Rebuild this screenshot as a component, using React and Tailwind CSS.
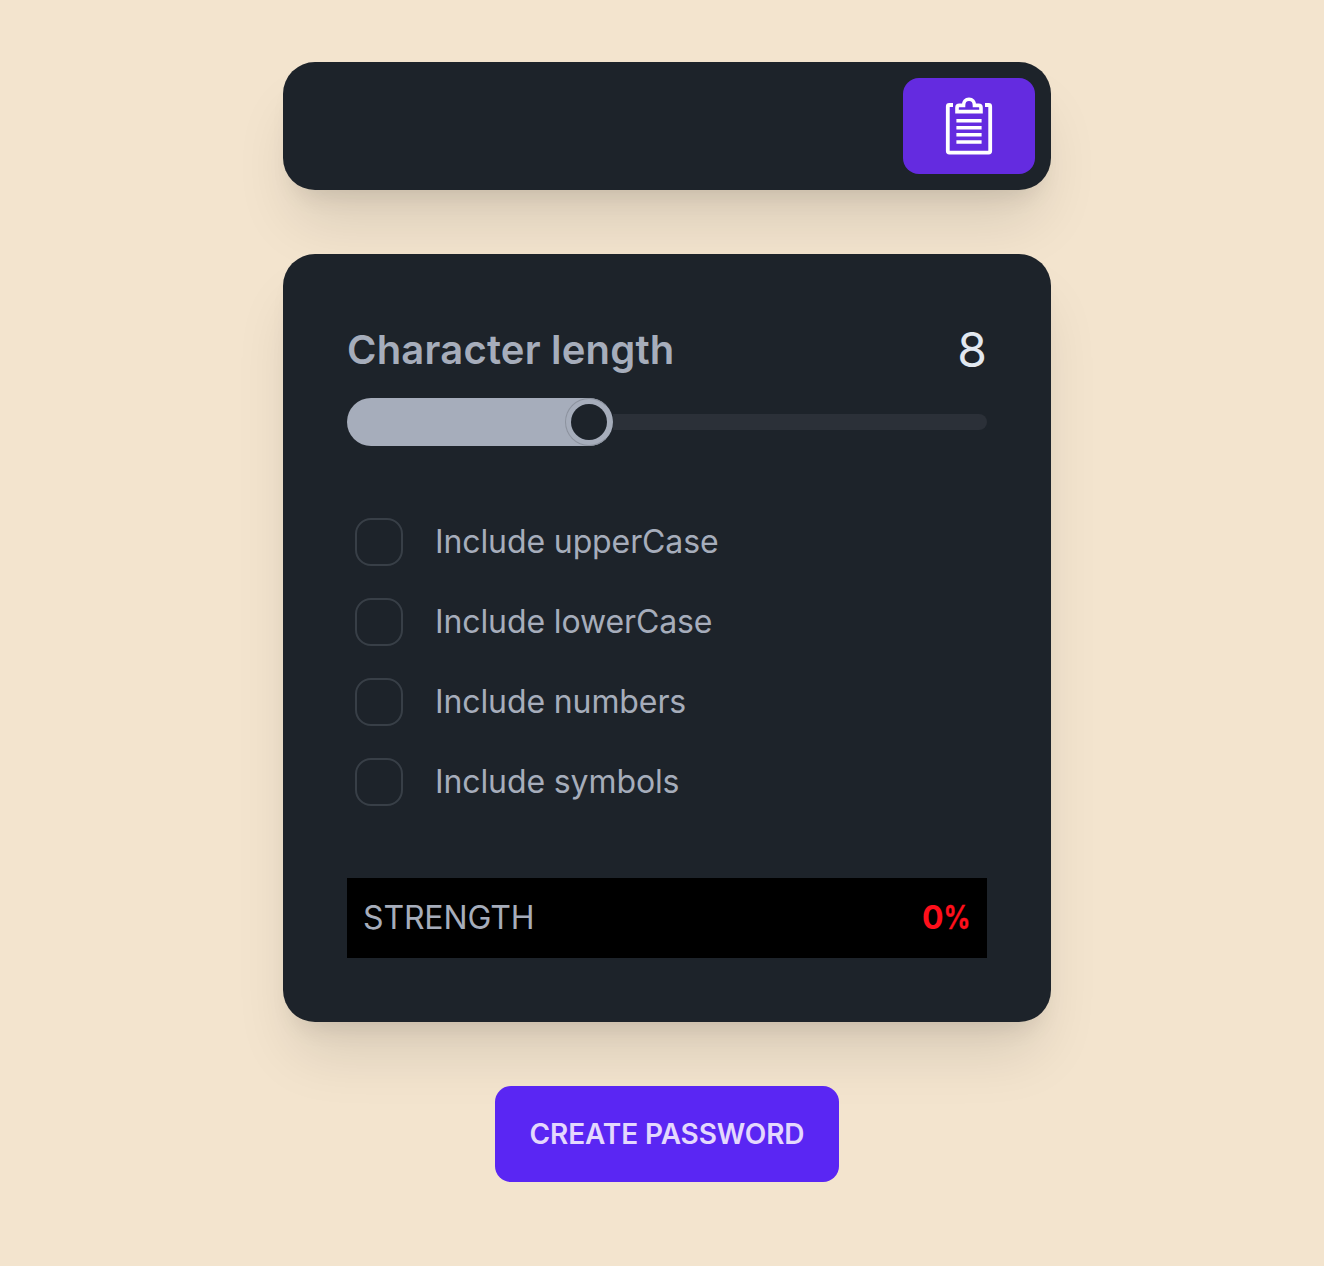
import React from "react";

const options = ["Include upperCase", "Include lowerCase", "Include numbers", "Include symbols"];

function ClipboardIcon() {
  return (
    <svg width="64" height="64" viewBox="0 0 64 64" fill="none" stroke="#fff" className="block">
      <path d="M16 11H12.3Q10.8 11 10.8 12.5V57.1Q10.8 58.6 12.3 58.6H51.7Q53.2 58.6 53.2 57.1V12.5Q53.2 11 51.7 11H48" strokeWidth="3.8" />
      <path d="M20 17.6V13.7Q20 11.4 22.3 11.4H26.5C26.5 7.5 28.7 5.2 32 5.2S37.5 7.5 37.5 11.4H41.7Q44 11.4 44 13.7V17.6Z" strokeWidth="3.6" />
      <path d="M19.4 26.7H44.6M19.4 33.8H44.6M19.4 40.8H44.6M19.4 48H44.6" strokeWidth="3.6" />
    </svg>
  );
}

export default function App() {
  return (
    <main className="flex min-h-[1266px] w-[1324px] flex-col items-center bg-[#f3e4ce] pt-[62px] pl-[10px] font-['Inter',sans-serif] text-[#a6adbb]">
      <div className="flex h-32 w-[768px] justify-end rounded-[32px] bg-[#1d232a] p-4 shadow-[0_40px_60px_-10px_rgba(0,0,0,0.11),0_16px_24px_-12px_rgba(0,0,0,0.1)]">
        <button className="flex h-24 w-[132px] items-center justify-center rounded-2xl bg-[#642be0]">
          <ClipboardIcon />
        </button>
      </div>
      <section className="mt-16 h-[768px] w-[768px] rounded-[32px] bg-[#1d232a] p-16 shadow-[0_40px_60px_-10px_rgba(0,0,0,0.11),0_16px_24px_-12px_rgba(0,0,0,0.1)]">
        <div className="flex h-16 items-center justify-between">
          <h2 className="text-[40px] leading-[56px] font-semibold tracking-[0.2px]">Character length</h2>
          <span className="text-5xl leading-[64px] text-[#e2e8f0]">8</span>
        </div>
        <div className="mt-4 flex h-12 items-center">
          <div className="flex h-12 w-[266px] items-center justify-end rounded-full bg-[#a6adbb]">
            <div className="flex size-12 items-center justify-center rounded-full border border-[#8c929e] border-r-transparent">
              <div className="size-9 shrink-0 rounded-full bg-[#1d232a]" />
            </div>
          </div>
          <div className="h-4 flex-1 rounded-r-full bg-[#2b3038]" />
        </div>
        <div className="mt-14">
          {options.map((label) => (
            <label key={label} className="flex h-20 items-center gap-8 pl-2 text-[32px] tracking-[-0.11px]">
              <span className="size-12 rounded-2xl border-2 border-[#383f47]" />
              <span>{label}</span>
            </label>
          ))}
        </div>
        <div className="mt-14 flex h-20 items-center justify-between bg-black px-4 text-[32px]">
          <span className="tracking-[-0.15px]">STRENGTH</span>
          <span className="flex font-bold text-[#ff0f1b]">
            <span>0</span>
            <span className="mr-px -ml-[6px] inline-block origin-right scale-x-[0.83] [-webkit-text-stroke:0.3px_#ff0f1b]">%</span>
          </span>
        </div>
      </section>
      <button className="mt-16 h-24 w-[344px] rounded-2xl bg-[#5a26f3] text-[28px] font-semibold tracking-[-0.13px] text-[#e4d8fd]">CREATE PASSWORD</button>
    </main>
  );
}
